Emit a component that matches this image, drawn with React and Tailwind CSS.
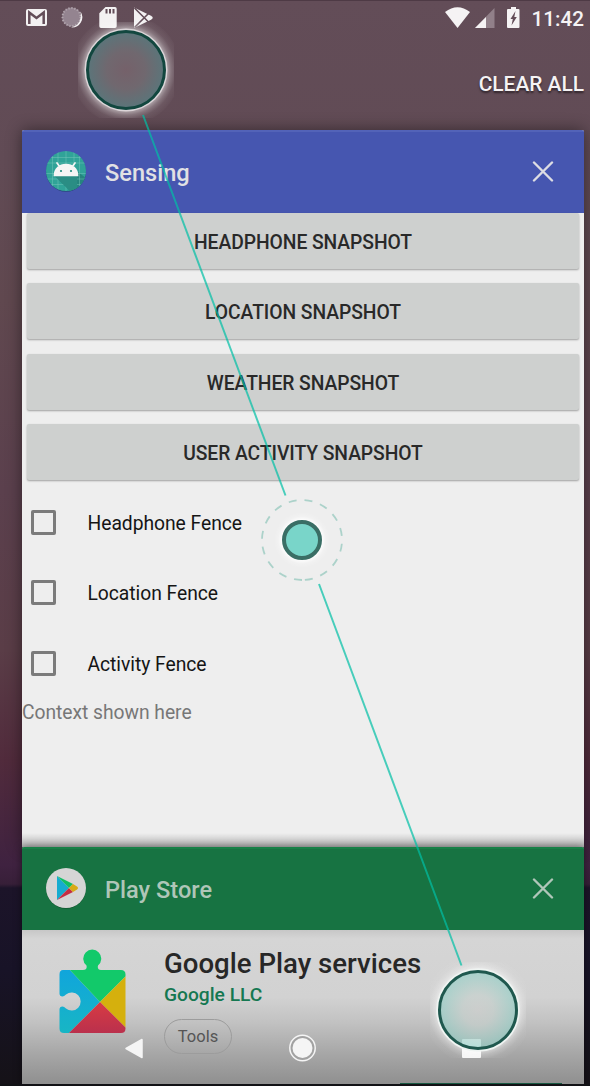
import React from "react";

const buttons = [
  { label: "HEADPHONE SNAPSHOT" },
  { label: "LOCATION SNAPSHOT" },
  { label: "WEATHER SNAPSHOT" },
  { label: "USER ACTIVITY SNAPSHOT" },
];
const fences = ["Headphone Fence", "Location Fence", "Activity Fence"];

function StatusBar() {
  return (
    <header className="flex h-[36px] shrink-0 items-center justify-between border-t border-[#4e3a45] pb-px pl-[25px] pr-[6px]">
      <svg width="130" height="22" viewBox="25 7 130 22" fill="#f3f1f2">
        <rect x="26" y="9" width="21" height="17" rx="2" />
        <path d="M29.3 24V12.6L36.5 18L43.7 12.6V24" fill="none" stroke="#634d58" strokeWidth="2.5" />
        <circle cx="71.5" cy="17" r="9.500" fill="#948490" />
        <circle cx="71.5" cy="17" r="9" fill="none" stroke="#b3a7af" strokeWidth="2" strokeDasharray="1.2 1.8" />
        <path d="M80.500 11.500A10.300 10.300 0 0 1 71 27.500Q77 26 79.500 21.500Q81.500 16.500 80.500 11.500z" />
        <path d="M105.500 7H115a1.700 1.700 0 0 1 1.700 1.700V26.300a1.700 1.700 0 0 1-1.700 1.700H101a1.700 1.700 0 0 1-1.700-1.700V13.200z" />
        <path d="M105.500 9h2v4.600h-2zM109 9h2v4.600h-2zM112.500 9h2v4.600h-2z" fill="#634d58" />
        <path d="M134 7.500L151 15.700Q154.500 17.700 151 19.700L134 28z" />
        <path d="M134.500 8L149.500 23M134.500 27.500L149.500 12.500" stroke="#634d58" strokeWidth="1.600" />
        <path d="M134 12L140 17.800L134 23.500z" />
      </svg>
      <div className="flex items-center">
        <svg width="80" height="22" viewBox="444 7 80 22" fill="#f5f3f4">
          <path d="M445 12Q457.500 2.500 470 12L457.500 28z" />
          <path d="M475 28L494.500 8V28z" fill="#918089" />
          <path d="M475 28L486 17V28z" />
          <path d="M511 7h5v2h2.500a1 1 0 0 1 1 1V27a1 1 0 0 1-1 1H508a1 1 0 0 1-1-1V10a1 1 0 0 1 1-1h3z" />
          <path d="M515.500 11L510.500 19H512.800L511.500 25.500L516.800 17H514.300z" fill="#634d58" />
        </svg>
        <span className="ml-[7px] w-[53px] whitespace-nowrap pt-px text-right text-[20.700px] font-medium leading-[24px] text-[#f5f3f4]">11:42</span>
      </div>
    </header>
  );
}

function CloseIcon({ color }) {
  return (
    <svg className="relative -top-[2px]" width="22" height="22" viewBox="0 0 22 22" stroke={color} strokeWidth="2.400" strokeLinecap="round">
      <path d="M2 2.500L20 20.500M20 2.500L2 20.500" />
    </svg>
  );
}

function AndroidIcon() {
  return (
    <svg className="relative -top-[2px]" width="42" height="42" viewBox="0 0 42 42">
      <defs><clipPath id="androidClip"><circle cx="21" cy="21" r="20" /></clipPath></defs>
      <circle cx="21" cy="21.700" r="20" fill="#29477d" />
      <g clipPath="url(#androidClip)">
        <path d="M0 0H42V42H0z" fill="#30a398" />
        <path d="M9 25L26 42H45V31L33 22z" fill="#25857e" />
        <path d="M7.500 0V42M13 0V42M21 0V42M29 0V42M34.500 0V42M0 7.500H42M0 13H42M0 23.500H42M0 29H42M0 34.500H42" stroke="#79c7bd" strokeOpacity=".65" strokeWidth=".7" />
        <path d="M9 25.500L26 42H32V25.500z" fill="#2a8d84" />
      </g>
      <path d="M9.500 25.500C9.500 19 14.500 14.500 21 14.500S32.500 19 32.500 25.500zM12 13L15 17M30 13L27 17" fill="#f5f5f5" stroke="#f5f5f5" strokeWidth="1.700" strokeLinecap="round" />
      <circle cx="16" cy="21" r="1.100" fill="#238c80" /><circle cx="26" cy="21" r="1.100" fill="#238c80" />
    </svg>
  );
}

function PlayIcon() {
  return (
    <svg className="relative -top-[2px]" width="42" height="42" viewBox="0 0 42 42">
      <circle cx="21" cy="21.700" r="20" fill="#13572f" /><circle cx="21" cy="21" r="20" fill="#d5d5d5" />
      <path d="M12 9V33L24 21z" fill="#16acd0" />
      <path d="M12 9L28 17L24 21z" fill="#12be66" />
      <path d="M12 33L28 25L24 21z" fill="#c52e43" />
      <path d="M28 17L32 19.500Q34 21 32 22.500L28 25L24 21z" fill="#d8aa16" />
    </svg>
  );
}

function PuzzleIcon() {
  return (
    <svg width="67" height="85" viewBox="0 0 67 85">
      <defs>
        <clipPath id="puzzleClip"><path d="M4 21H24Q28.500 21 27.500 16.500A9 9 0 1 1 39 16.500Q38 21 42 21H62Q66.500 21 66.500 25.500V79.500Q66.500 84 62 84H5Q.5 84 .5 79.500V60.500Q.5 57.500 3.500 57.500Q5 57.500 7 59.500A9 9 0 1 0 7 45.500Q5 47.500 3.500 47.500Q.5 47.500 .5 44.500V25.500Q.5 21 4 21z" /></clipPath>
        <linearGradient id="puzzleBlue" x2="0" y2="1"><stop stopColor="#10a5dc" /><stop offset="1" stopColor="#18b6c4" /></linearGradient>
        <linearGradient id="puzzleRed" x2="0" y2="1"><stop stopColor="#d83b43" /><stop offset="1" stopColor="#b9304d" /></linearGradient>
      </defs>
      <g clipPath="url(#puzzleClip)">
        <path d="M0 20V85H9L41 53L10 20z" fill="url(#puzzleBlue)" />
        <path d="M10 20V0H67V27L41 53z" fill="#12c96a" />
        <path d="M67 27V79L41 53z" fill="#d5b00d" />
        <path d="M9 85L41 53L67 79V85H9z" fill="url(#puzzleRed)" />
      </g>
    </svg>
  );
}

function CardHeader({ icon, title, tone, textTone, closeTone }) {
  return (
    <div className={"flex h-[83px] shrink-0 items-center rounded-t-[2px] pl-[23px] pr-[30px] " + tone}>
      {icon}
      <h2 className={"ml-[18px] flex-1 text-[23.600px] font-medium leading-[28px] " + textTone}>{title}</h2>
      <CloseIcon color={closeTone} />
    </div>
  );
}

function GestureOverlay() {
  return (
    <svg className="pointer-events-none absolute inset-0" width="590" height="1086">
      <defs>
        <radialGradient id="topTouch"><stop stopColor="#75616a" /><stop offset=".5" stopColor="#70686f" /><stop offset="1" stopColor="#5b757a" /></radialGradient>
        <radialGradient id="bottomTouch"><stop stopColor="#cdd0ce" stopOpacity=".6" /><stop offset=".4" stopColor="#c4d1cd" stopOpacity=".6" /><stop offset="1" stopColor="#8bcfc5" stopOpacity=".6" /></radialGradient>
        <radialGradient id="halo"><stop offset=".74" stopColor="#fff" stopOpacity=".5" /><stop offset=".82" stopColor="#fff" stopOpacity=".23" /><stop offset=".9" stopColor="#fff" stopOpacity=".07" /><stop offset="1" stopColor="#fff" stopOpacity=".02" /></radialGradient>
        <radialGradient id="smallHalo"><stop offset=".7" stopColor="#fff" stopOpacity=".9" /><stop offset=".85" stopColor="#fff" stopOpacity=".2" /><stop offset="1" stopColor="#fff" stopOpacity="0" /></radialGradient>
        <mask id="haloMask"><rect x="430" y="962" width="96" height="96" fill="white" /><circle cx="478" cy="1010" r="39" fill="black" /></mask>
      </defs>
      <svg x="78" y="22" width="96" height="96"><circle cx="48" cy="48" r="55" fill="url(#halo)" /></svg>
      <circle cx="126" cy="70" r="41.500" fill="#dcd5d9" />
      <circle cx="126" cy="70" r="38.500" fill="url(#topTouch)" stroke="#12473f" strokeWidth="3" />
      <g mask="url(#haloMask)"><circle cx="478" cy="1010" r="55" fill="url(#halo)" /><circle cx="478" cy="1010" r="40.500" fill="none" stroke="#eff4f2" strokeWidth="2.500" /></g>
      <circle cx="478" cy="1010" r="38.500" fill="url(#bottomTouch)" stroke="#1f584e" strokeWidth="3" />
      <path d="M143 115L285.500 495.500M319 584L461.500 965.500" stroke="#00bfa5" strokeOpacity=".7" strokeWidth="2" />
      <circle cx="302" cy="540" r="28" fill="url(#smallHalo)" />
      <circle cx="302" cy="540" r="18" fill="#79d5c9" stroke="#3a6e65" strokeWidth="4" />
      <circle cx="302" cy="540" r="40" fill="none" stroke="#acd2ca" strokeWidth="1.800" strokeDasharray="8 8" transform="rotate(90 302 540)" />
    </svg>
  );
}

function NavigationIcons() {
  return (
    <svg className="absolute left-0 top-[1028px]" width="590" height="40" viewBox="0 1028 590 40" fill="#f5f5f5">
      <path d="M126 1048.500L142 1039.500V1057.600z" stroke="#f5f5f5" strokeWidth="1.500" strokeLinejoin="round" />
      <circle cx="302.500" cy="1048" r="12.700" fill="#a2a2a2" stroke="#f5f5f5" strokeWidth="1.500" />
      <circle cx="302.500" cy="1048" r="10" />
      <rect x="462" y="1039" width="19" height="19" rx="1" />
    </svg>
  );
}

export default function App() {
  return (
    <main className="relative flex h-[1086px] w-[590px] flex-col overflow-hidden bg-[linear-gradient(180deg,#634d58_0px,#614b55_160px,#60484f_300px,#5b404d_490px,#5a3d47_650px,#512b3c_760px,#3f2240_865px,#371f38_884px,#1c1429_888px,#181327_970px,#151217_1086px)] font-[Roboto,sans-serif]">
      <StatusBar />
      <div className="flex h-[94px] shrink-0 justify-end pr-[6px] pt-[36px]">
        <span className="whitespace-nowrap text-[20.900px] font-medium leading-[24px] text-[#f5f3f4] [text-shadow:0_2px_2px_#30252b]">CLEAR ALL</span>
      </div>
      <section className="ml-[22px] flex h-[717px] w-[562px] shrink-0 flex-col rounded-t-[2px] bg-[#eeeeee] shadow-[0_0_16px_#00000075]">
        <CardHeader icon={<AndroidIcon />} title="Sensing" tone="bg-[#4656b0] border-t-2 border-[#5363b8]" textTone="text-[#e1e1e4]" closeTone="#dddde3" />
        <div className="flex flex-col gap-[14.300px] px-[5px]">
          {buttons.map((button) => (
            <button key={button.label} className="h-[56px] shrink-0 rounded-[2px] bg-[#ced0cf] pt-[4px] text-[19.300px] font-medium leading-[24px] tracking-[-0.06px] text-[#292929] shadow-[0_1px_2px_#00000055]">{button.label}</button>
          ))}
        </div>
        <div className="mt-[7.500px] flex flex-col">
          {fences.map((fence) => (
            <div key={fence} className="flex h-[70.300px] items-center pl-[9px]">
              <span className="h-[25px] w-[25px] rounded-[2px] border-[3px] border-[#7b7b7b]" />
              <span className="ml-[31.500px] pt-[3px] text-[19.300px] leading-[24px] tracking-[-0.04px] text-[#151515]">{fence}</span>
            </div>
          ))}
        </div>
        <p className="mt-[3px] text-[19.300px] leading-[24px] tracking-[-0.04px] text-[#777777]">Context shown here</p>
        <div className="mt-auto h-[14px] shrink-0 bg-gradient-to-b from-transparent to-black/25" />
      </section>
      <section className="ml-[22px] flex h-[237px] w-[562px] shrink-0 flex-col rounded-t-[2px] bg-[linear-gradient(180deg,#c7c7c7_83px,#d5d5d5_92px,#d2d2d2_150px,#c2c2c2_175px,#a8a8a8_205px,#909090_236px)] shadow-[0_0_8px_#0000007a]">
        <CardHeader icon={<PlayIcon />} title="Play Store" tone="bg-[#177342] border-t-2 border-[#178047]" textTone="text-[#afc6b8]" closeTone="#b0c6b9" />
        <div className="flex pl-[37px] pt-[19px]">
          <PuzzleIcon />
          <div className="ml-[38px] flex flex-col items-start">
            <h3 className="-mt-px text-[27.600px] font-medium leading-[32px] text-[#272727]">Google Play services</h3>
            <p className="text-[19.200px] font-medium leading-[30px] text-[#157851]">Google LLC</p>
            <span className="mt-[9px] flex h-[35px] w-[68px] items-center justify-center rounded-full border border-[#9c9c9c] pt-[2px] text-[16.500px] text-[#555555]">Tools</span>
          </div>
        </div>
        <div className="ml-[378px] mt-auto h-px w-[162px] shrink-0 bg-[#185942]" />
      </section>
      <footer className="h-[2px] bg-[#111115]" />
      <NavigationIcons />
      <GestureOverlay />
    </main>
  );
}
